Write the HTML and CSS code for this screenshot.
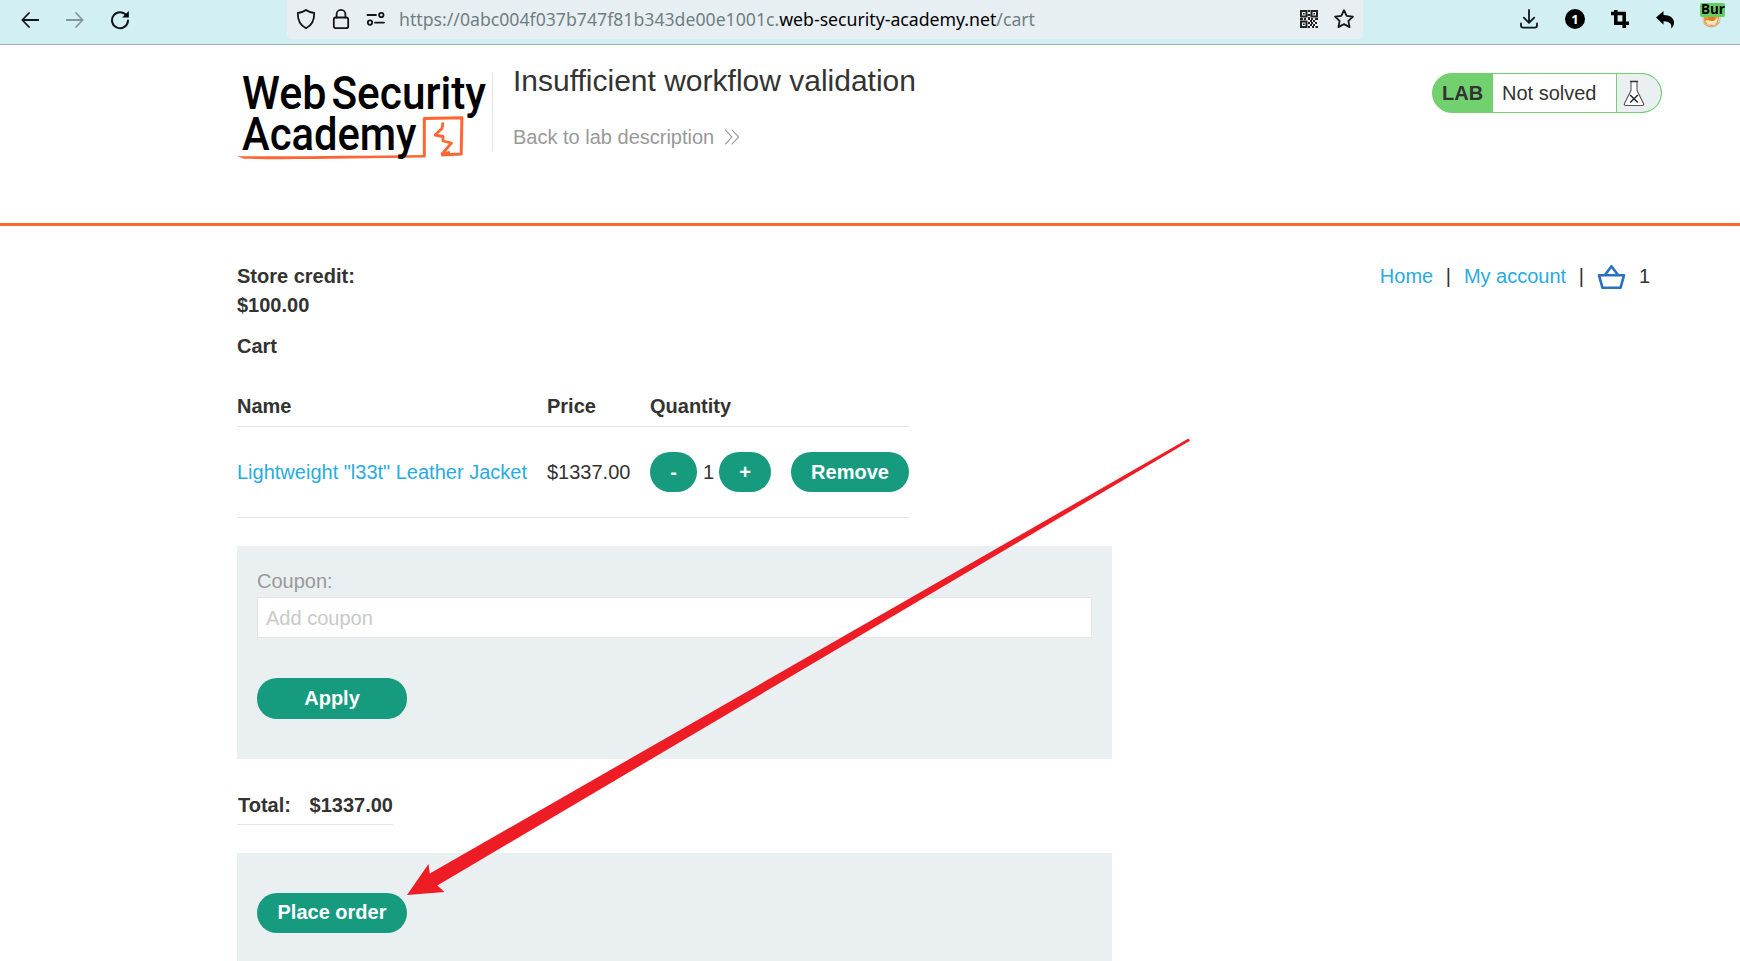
FILE: index.html
```html
<!DOCTYPE html>
<html lang="en">
<head>
<meta charset="utf-8">
<title>Insufficient workflow validation</title>
<link rel="stylesheet" href="styles.css">
</head>
<body>
<div class="toolbar">
  <div class="nav-icons">
    <svg width="18" height="20" viewBox="0 0 18 20" class="line"><path d="M17.3 10H1.500M8 3 1.300 10 8 17"/></svg>
    <svg width="18" height="20" viewBox="0 0 18 20" class="line faded"><path d="M.7 10h15.800M10 3l6.700 7L10 17"/></svg>
    <svg width="20" height="20" viewBox="0 0 20 20" class="line reload"><path d="M16.800 6A8 8 0 1 0 18 10.600" stroke-width="2"/><path d="M18.800 1v6.600h-6.600z" fill="#000" stroke="none"/></svg>
  </div>
  <div class="urlbar">
    <svg class="line shield" width="20" height="22" viewBox="0 0 20 22"><path d="M10 2c2.300 1.700 5 2.600 8.200 3 .2 7-1.700 12-8.200 15.300C3.500 17 1.600 12 1.800 5 5 4.600 7.700 3.700 10 2z"/></svg>
    <svg class="line lock" width="18" height="22" viewBox="0 0 18 22"><rect x="1.800" y="9.500" width="14.400" height="10.700" rx="2"/><path d="M4.600 9.500V6.300a4.400 4.400 0 0 1 8.800 0v3.200"/></svg>
    <svg class="line perms" width="20" height="16" viewBox="0 0 20 16"><path d="M1.500 4h8.500M9 11.600h9"/><circle cx="15.300" cy="4" r="2.200"/><circle cx="4" cy="11.600" r="2.200"/></svg>
    <svg class="url" width="650" height="39"><text x="1" y="25.500" textLength="636" lengthAdjust="spacingAndGlyphs">https://0abc004f037b747f81b343de00e1001c.<tspan class="host">web-security-academy.net</tspan>/cart</text></svg>
    <svg class="qr" width="18" height="18" viewBox="0 0 18 18"><path fill="none" stroke="#222" stroke-width="2" d="M1 1h5.500v5.500H1zM11.500 1H17v5.500h-5.500zM1 11.500h5.500V17H1z"/><path fill="#222" d="M3 3h1.600v1.600H3zM13.400 3H15v1.600h-1.600zM3 13.400h1.600V15H3zM8 0h2v2H8zM7.500 4h3v2h-3zM0 8h3v2H0zM4 8h2v2H4zM8 7h2v3H8zM11 8h2v2h-2zM15 8h3v2h-3zM10 10h2v2h-2zM13 10h2v2h-2zM8 12h2v2H8zM11 12h2v2h-2zM15 12h2v2h-2zM10 14h2v2h-2zM13 14h2v2h-2zM8 16h2v2H8zM12 16h2v2h-2zM15.500 16H18v2h-2.500z"/></svg>
    <svg class="line star" width="20" height="20" viewBox="0 0 20 20"><path d="M10 1.200l2.700 5.600 6.200.8-4.500 4.300 1.100 6.200-5.500-3-5.500 3 1.100-6.200L1.100 7.600l6.200-.8z"/></svg>
  </div>
  <div class="tools">
    <svg class="line" width="18" height="20" viewBox="0 0 18 20"><path d="M9 .9v12.600M3.800 8.600 9 13.800l5.200-5.200M1 14.500v1.800c0 1.500.8 2.400 2.300 2.400h11.400c1.500 0 2.300-.9 2.300-2.400v-1.800"/></svg>
    <span class="count">1</span>
    <svg width="18" height="20" viewBox="0 0 18 20"><path fill="none" stroke="#000" stroke-width="3.600" d="M0 4.500h13.200V19M4.800 1v13.200H18"/></svg>
    <svg width="19" height="18" viewBox="0 0 19 18"><path d="M0 6.500 7.500 0v4C14 4 18 7 18 11.500c0 2.500-1.100 4.600-2.900 6 1.100-4.500-1.300-7-7.600-7.200v3.500z"/></svg>
    <div class="fox">
      <svg width="22" height="22" viewBox="0 0 22 22"><circle cx="10.500" cy="11" r="9.500" fill="#d9cdbd"/><path d="M3 8h15.500l-2 8-6 3-7-3z" fill="#f28c28"/><path d="M4 14l3 3.500 6 .5 3-3 1-5-4 4-5-1z" fill="#fbe3c4"/><path d="M7 11l4-1.500 3 1-2 3.500-4-.5z" fill="#e8761c"/><path d="M2.500 16c4 5 12 5 16-1" fill="none" stroke="#e29a5c"/></svg>
      <span class="tag">Bur</span>
    </div>
  </div>
</div>

<header class="lab-header">
  <svg class="logo" width="254" height="90" viewBox="0 0 254 90">
    <path fill="#f63" d="M-1 89.200c60 .5 120-.6 188-1.200v2.500C120 91 60 93 6 91.800z"/>
    <path class="mark" d="M186.300 90V51.400l37.600-.7-.7 36.400-19.900.9"/>
    <path class="mark thin" d="M205 55.500l-1 6-7 6.500 8 1.500v4.500l8.500 2-9.500 11 8-1.500"/>
    <text x="4" y="42" textLength="84.500" lengthAdjust="spacingAndGlyphs">Web</text>
    <text x="93.500" y="42" textLength="154.500" lengthAdjust="spacingAndGlyphs">Security</text>
    <text x="4" y="82.500" textLength="174.500" lengthAdjust="spacingAndGlyphs">Academy</text>
  </svg>
  <div class="title-block">
    <h1>Insufficient workflow validation</h1>
    <a class="back">Back to lab description<svg width="16" height="16" viewBox="0 0 16 16"><path d="M1 .7l7 7.300-7 7.300M7.700 .7l7 7.300-7 7.300" fill="none" stroke="#999" stroke-width="1.100"/></svg></a>
  </div>
  <div class="status">
    <b>LAB</b><span>Not solved</span>
    <i><svg width="22" height="27" viewBox="0 0 22 27"><path d="M8 2v8.500L1.500 23.500q-.8 2 1.300 2h16.400q2.100 0 1.300-2L14 10.500V2" fill="#fff" stroke="#555" stroke-width="1.100"/><path d="M7 1.500h8" stroke="#333" stroke-width="1.600"/><path d="M7.200 15l7.600 7.600M14.800 15l-7.600 7.600" stroke="#222" stroke-width="1.400"/></svg></i>
  </div>
</header>

<main>
  <div class="top">
    <p><strong>Store credit:<br>$100.00</strong></p>
    <nav><a>Home</a><span>|</span><a>My account</a><span>|</span>
      <svg width="29" height="26" viewBox="0 0 29 26"><path d="M2 11.300h25l-3.500 12.500h-18zM8 11l6.500-8.800L21 11" fill="none" stroke="#2a71c0" stroke-width="2.600" stroke-linejoin="round"/></svg><span class="num">1</span></nav>
  </div>
  <h2>Cart</h2>
  <div class="cart">
    <div class="row head"><span>Name</span><span>Price</span><span>Quantity</span></div>
    <div class="row item"><a>Lightweight "l33t" Leather Jacket</a><span>$1337.00</span>
      <div class="qty"><button class="minus">-</button><span>1</span><button class="plus">+</button></div>
      <button class="remove">Remove</button></div>
  </div>
  <form class="panel coupon">
    <label>Coupon:</label>
    <input type="text" placeholder="Add coupon">
    <button type="button" class="wide apply">Apply</button>
  </form>
  <div class="total"><span>Total:</span><span>$1337.00</span></div>
  <div class="panel order"><button class="wide">Place order</button></div>
</main>

<svg class="arrow" width="1740" height="961"><path fill="#ee1c25" d="M407 895l21.500-31 1.300 9.500L1188.500 438.500l1.500 2.200L437.300 885.500l7.200 6.500z"/></svg>
</body>
</html>
```
FILE: styles.css
```css
* { box-sizing: border-box; }
body {
  margin: 0;
  width: 1740px;
  height: 961px;
  overflow: hidden;
  position: relative;
  background: #fff;
  color: #333332;
  font: 20px/29px "Liberation Sans", Arial, sans-serif;
}
svg { display: block; flex: none; }
a { color: #29abe2; }
.line { fill: none; stroke: #15141a; stroke-width: 1.800; stroke-linecap: round; stroke-linejoin: round; }
.faded { stroke: #84979b; }

.toolbar {
  display: flex;
  height: 45px;
  background: #d2eff3;
  border-bottom: 1px solid #9bafb1;
}
.nav-icons { display: flex; gap: 27px; width: 287px; padding: 10px 0 0 21px; }
.reload { margin-left: -1px; }
.urlbar {
  display: flex;
  align-items: flex-start;
  width: 1076px;
  height: 39px;
  padding-left: 9px;
  background: #e8eff3;
  border-radius: 0 0 5px 5px;
}
.shield { margin: 8px 16px 0 0; }
.lock { margin: 8px 16px 0 0; }
.perms { margin: 11px 12px 0 0; }
.url { font: 18px "Noto Sans", sans-serif; fill: #6f7f81; }
.url .host { fill: #000; }
.qr { margin: 10px 16px 0 252px; }
.star { margin-top: 9px; }
.tools { display: flex; align-items: flex-start; padding: 9px 0 0 157px; }
.count {
  width: 20px;
  height: 20px;
  margin: 0 26px 0 27px;
  border-radius: 50%;
  background: #000;
  color: #fff;
  text-align: center;
  font: bold 13px/20px "Open Sans", sans-serif;
}
.tools > svg:nth-of-type(3) { margin: 2px 26px 0 27px; }
.fox { position: relative; }
.fox svg { margin-top: -2px; }
.tag {
  position: absolute;
  left: -1px;
  top: -6px;
  width: 25px;
  height: 14px;
  border-radius: 2px;
  background: #66cc66;
  color: #000;
  text-align: right;
  font: bold 13.500px/13px "Open Sans", sans-serif;
}

.lab-header {
  display: flex;
  height: 181px;
  padding: 22px 78px 0 238px;
  border-bottom: 3px solid #ff6633;
}
.logo { overflow: visible; font: 500 47px Roboto, sans-serif; fill: #000; }
.logo .mark { fill: none; stroke: #f63; stroke-width: 3; stroke-linejoin: round; }
.logo .thin { stroke-width: 2.800; }
.title-block { height: 78px; margin-top: 6px; padding-left: 20px; border-left: 1px solid #e4e4e4; }
h1 { margin: -10px 0 0; font-size: 30px; font-weight: 400; line-height: 35px; }
.back { display: flex; gap: 10px; margin-top: 25px; color: #999; }
.back svg { margin-top: 6px; }
.status {
  display: flex;
  width: 230px;
  height: 40px;
  margin: 6px 0 0 auto;
  border: 1px solid #71d16f;
  border-radius: 20px;
  overflow: hidden;
  background: #71d16f;
  line-height: 38px;
}
.status b { width: 60px; padding-left: 9px; line-height: 39px; }
.status span { width: 124px; padding-left: 9px; background: #fff; border-right: 1px solid #71d16f; }
.status i { flex: 1; padding: 6px 0 0 6px; background: #eaeff2; border-radius: 0 19px 19px 0; }

main { padding: 36px 82px 0 237px; }
.top { display: flex; justify-content: space-between; }
p { margin: 0; }
nav { display: flex; padding-right: 8px; }
nav span { margin: 0 13px 0 12.500px; }
nav svg { margin: 2px 0 0; }
nav .num { margin: 0 0 0 13px; }
h2 { margin: 12px 0 0; font-size: 20px; line-height: 29px; }
.cart { width: 672px; margin-top: 23px; }
.row { display: grid; grid-template-columns: 310px 103px 141px 118px; border-bottom: 1px solid #e4e4e4; }
.head { height: 43px; padding-top: 8px; font-weight: 700; }
.item { height: 91px; align-items: center; }
.qty { display: flex; align-items: center; }
.qty span { width: 22px; padding-left: 6px; }
button {
  height: 40px;
  padding: 0;
  border: 0;
  border-radius: 20px;
  background: #169b7f;
  color: #fff;
  font: bold 20px/40px "Liberation Sans", Arial, sans-serif;
}
.minus { width: 47px; }
.plus { width: 52px; }
.remove { width: 118px; }
.panel { width: 875px; padding: 20px; background: #eaeff2; }
.coupon { height: 213px; margin-top: 28px; }
label { display: block; height: 31px; padding-top: 1px; color: #999; }
input {
  display: block;
  width: 835px;
  height: 41px;
  padding: 2px 8px 0;
  border: 1px solid #e4e4e4;
  background: #fff;
  font: 20px "Liberation Sans", Arial, sans-serif;
}
input::placeholder { color: #c9c9c9; opacity: 1; }
.wide { display: block; width: 150px; line-height: 38px; padding-bottom: 2px; }
.apply { height: 41px; margin-top: 40px; }
.total {
  display: flex;
  justify-content: space-between;
  width: 156px;
  height: 34px;
  margin-top: 32px;
  padding-left: 1px;
  border-bottom: 1px solid #e4e4e4;
  font-weight: 700;
}
.order { height: 108px; margin-top: 28px; padding-top: 40px; }
.arrow { position: absolute; left: 0; top: 0; pointer-events: none; }
```
